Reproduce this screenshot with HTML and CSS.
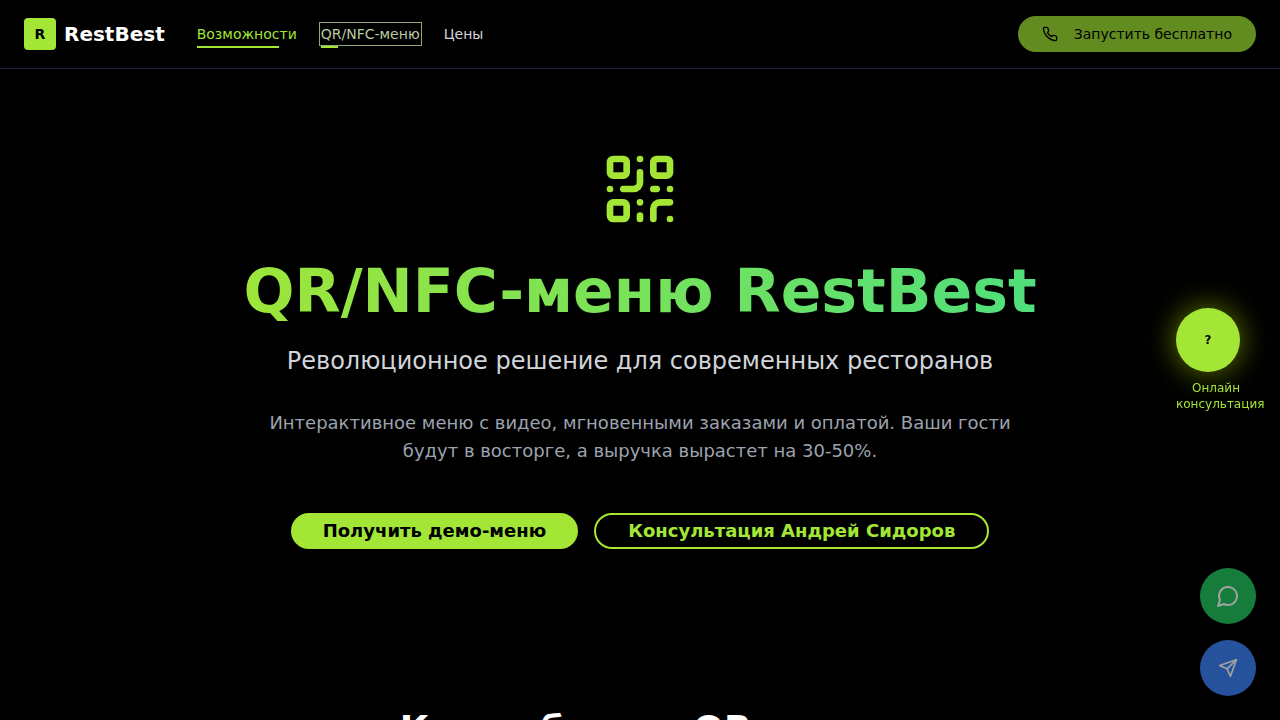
FILE: index.html
```html
<!DOCTYPE html>
<html lang="ru">
<head>
<meta charset="utf-8">
<meta name="viewport" content="width=device-width, initial-scale=1">
<title>QR/NFC-меню RestBest</title>
<link rel="stylesheet" href="styles.css">
</head>
<body>
<header class="header">
  <div class="header-left">
    <a class="brand" href="#"><span class="brand-mark">R</span><span class="brand-name">RestBest</span></a>
    <nav class="nav">
      <a class="nav-link nav-link-active" href="#features">Возможности</a>
      <a class="nav-link nav-link-focus" href="#menu">QR/NFC-меню</a>
      <a class="nav-link" href="#prices">Цены</a>
    </nav>
  </div>
  <button class="launch" type="button">
    <svg class="launch-icon" viewBox="0 0 24 24" aria-hidden="true"><path d="M22 16.92v3a2 2 0 0 1-2.18 2 19.79 19.79 0 0 1-8.63-3.07 19.5 19.5 0 0 1-6-6 19.79 19.79 0 0 1-3.07-8.67A2 2 0 0 1 4.11 2h3a2 2 0 0 1 2 1.72 12.84 12.84 0 0 0 .7 2.81 2 2 0 0 1-.45 2.11L8.09 9.91a16 16 0 0 0 6 6l1.27-1.27a2 2 0 0 1 2.11-.45 12.84 12.84 0 0 0 2.81.7A2 2 0 0 1 22 16.92z"/></svg>
    Запустить бесплатно
  </button>
</header>
<main>
  <section class="hero">
    <svg class="hero-icon" viewBox="0 0 24 24" aria-hidden="true">
      <rect x="3" y="3" width="5" height="5" rx="1"/><rect x="16" y="3" width="5" height="5" rx="1"/><rect x="3" y="16" width="5" height="5" rx="1"/>
      <path d="M21 16h-3a2 2 0 0 0-2 2v3"/><path d="M21 21v.01"/><path d="M12 7v3a2 2 0 0 1-2 2H7"/><path d="M3 12h.01"/><path d="M12 3h.01"/><path d="M12 16v.01"/><path d="M16 12h1"/><path d="M21 12v.01"/><path d="M12 21v-1"/>
    </svg>
    <h1 class="hero-title">QR/NFC-меню RestBest</h1>
    <p class="hero-subtitle">Революционное решение для современных ресторанов</p>
    <p class="hero-text">Интерактивное меню с видео, мгновенными заказами и оплатой. Ваши гости будут в восторге, а выручка вырастет на 30-50%.</p>
    <div class="hero-actions">
      <button class="button button-solid" type="button">Получить демо-меню</button>
      <button class="button button-outline" type="button">Консультация Андрей Сидоров</button>
    </div>
  </section>
  <section class="how">
    <h2 class="how-title">Как работает QR-меню</h2>
  </section>
</main>
<aside class="help">
  <button class="help-button" type="button" aria-labelledby="help-label">?</button>
  <span class="help-label" id="help-label">Онлайн консультация</span>
</aside>
<div class="contacts">
  <button class="contact contact-chat" type="button" aria-label="Чат">
    <svg class="contact-icon-chat" viewBox="0 0 24 24" aria-hidden="true"><path d="M7.9 20A9 9 0 1 0 4 16.1L2 22Z"/></svg>
  </button>
  <button class="contact contact-send" type="button" aria-label="Telegram">
    <svg class="contact-icon-send" viewBox="0 0 24 24" aria-hidden="true"><path d="m22 2-7 20-4-9-9-4Z"/><path d="M22 2 11 13"/></svg>
  </button>
</div>
</body>
</html>
```
FILE: styles.css
```css
* { box-sizing: border-box; }
html { scrollbar-width: none; }
body {
  margin: 0;
  background: #000;
  color: #fff;
  font-family: "DejaVu Sans", sans-serif;
  font-size: 16px;
  line-height: 24px;
}
h1, h2, p { margin: 0; }
a { color: inherit; text-decoration: none; }
button { border: 0; padding: 0; font: inherit; cursor: pointer; }
svg { display: block; fill: none; stroke: currentColor; stroke-width: 2; stroke-linecap: round; stroke-linejoin: round; }

.header {
  display: flex;
  align-items: center;
  justify-content: space-between;
  padding: 16px 24px;
  border-bottom: 1px solid #1f2937;
}
.header-left { display: flex; align-items: center; gap: 32px; }
.brand { display: flex; align-items: center; gap: 8px; }
.brand-mark {
  display: grid;
  place-items: center;
  width: 32px;
  height: 32px;
  border-radius: 4px;
  background: #a3e635;
  color: #000;
  font-size: 14px;
  font-weight: 700;
}
.brand-name { font-size: 20px; line-height: 28px; font-weight: 700; }
.nav { display: flex; gap: 24px; }
.nav-link { position: relative; color: #d1d5db; font-size: 14px; line-height: 20px; }
.nav-link-active { color: #a3e635; }
.nav-link-focus { color: #bac8a4; outline: 1px solid #93a777; outline-offset: 1px; }
.nav-link-active::after, .nav-link-focus::after {
  content: "";
  position: absolute;
  left: 0;
  bottom: -4px;
  height: 2px;
  width: 82px;
  background: #a3e635;
}
.nav-link-focus::after { width: 17px; }
.launch {
  display: flex;
  align-items: center;
  gap: 16px;
  height: 36px;
  padding: 0 24px;
  border-radius: 18px;
  background: #638c20;
  color: #000;
  font-size: 14px;
}
.launch-icon { width: 16px; height: 16px; }

.hero {
  display: flex;
  flex-direction: column;
  align-items: center;
  padding: 80px 24px;
  text-align: center;
}
.hero-icon { width: 80px; height: 80px; margin-bottom: 32px; color: #a3e635; }
.hero-title {
  margin-bottom: 24px;
  width: 100%;
  max-width: 896px;
  background: linear-gradient(to right, #a3e635, #4ade80);
  background-clip: text;
  -webkit-background-clip: text;
  color: transparent;
  font-size: 60px;
  line-height: 60px;
  font-weight: 700;
}
.hero-subtitle { margin-bottom: 32px; color: #d1d5db; font-size: 24px; line-height: 32px; }
.hero-text { max-width: 768px; margin-bottom: 48px; color: #9ca3af; font-size: 18px; line-height: 28px; }
.hero-actions { display: flex; flex-wrap: wrap; justify-content: center; gap: 16px; }
.button { height: 36px; padding: 0 32px; border-radius: 18px; font-size: 18px; font-weight: 700; }
.button-solid { background: #a3e635; color: #000; }
.button-outline { border: 2px solid #a3e635; background: transparent; color: #a3e635; }

.how { padding: 80px 24px; text-align: center; }
.how-title { font-size: 36px; line-height: 40px; font-weight: 700; }

.help {
  position: fixed;
  top: 50%;
  right: 24px;
  transform: translateY(-50%);
  width: 80px;
}
.help-button {
  display: block;
  width: 64px;
  height: 64px;
  border-radius: 50%;
  background: #a3e635;
  box-shadow: 0 0 30px rgba(204, 255, 0, 0.5);
  color: #000;
  font-size: 12px;
  font-weight: 700;
}
.help-label { display: block; margin-top: 8px; color: #a3e635; font-size: 12px; line-height: 16px; text-align: center; }

.contacts { position: fixed; right: 24px; bottom: 24px; display: grid; gap: 16px; }
.contact {
  display: grid;
  place-items: center;
  width: 56px;
  height: 56px;
  border-radius: 50%;
  color: #fff;
  opacity: 0.63;
}
.contact-chat { background: #22c55e; }
.contact-send { background: #3b82f6; }
.contact-icon-chat { width: 24px; height: 24px; }
.contact-icon-send { width: 20px; height: 20px; }
```
